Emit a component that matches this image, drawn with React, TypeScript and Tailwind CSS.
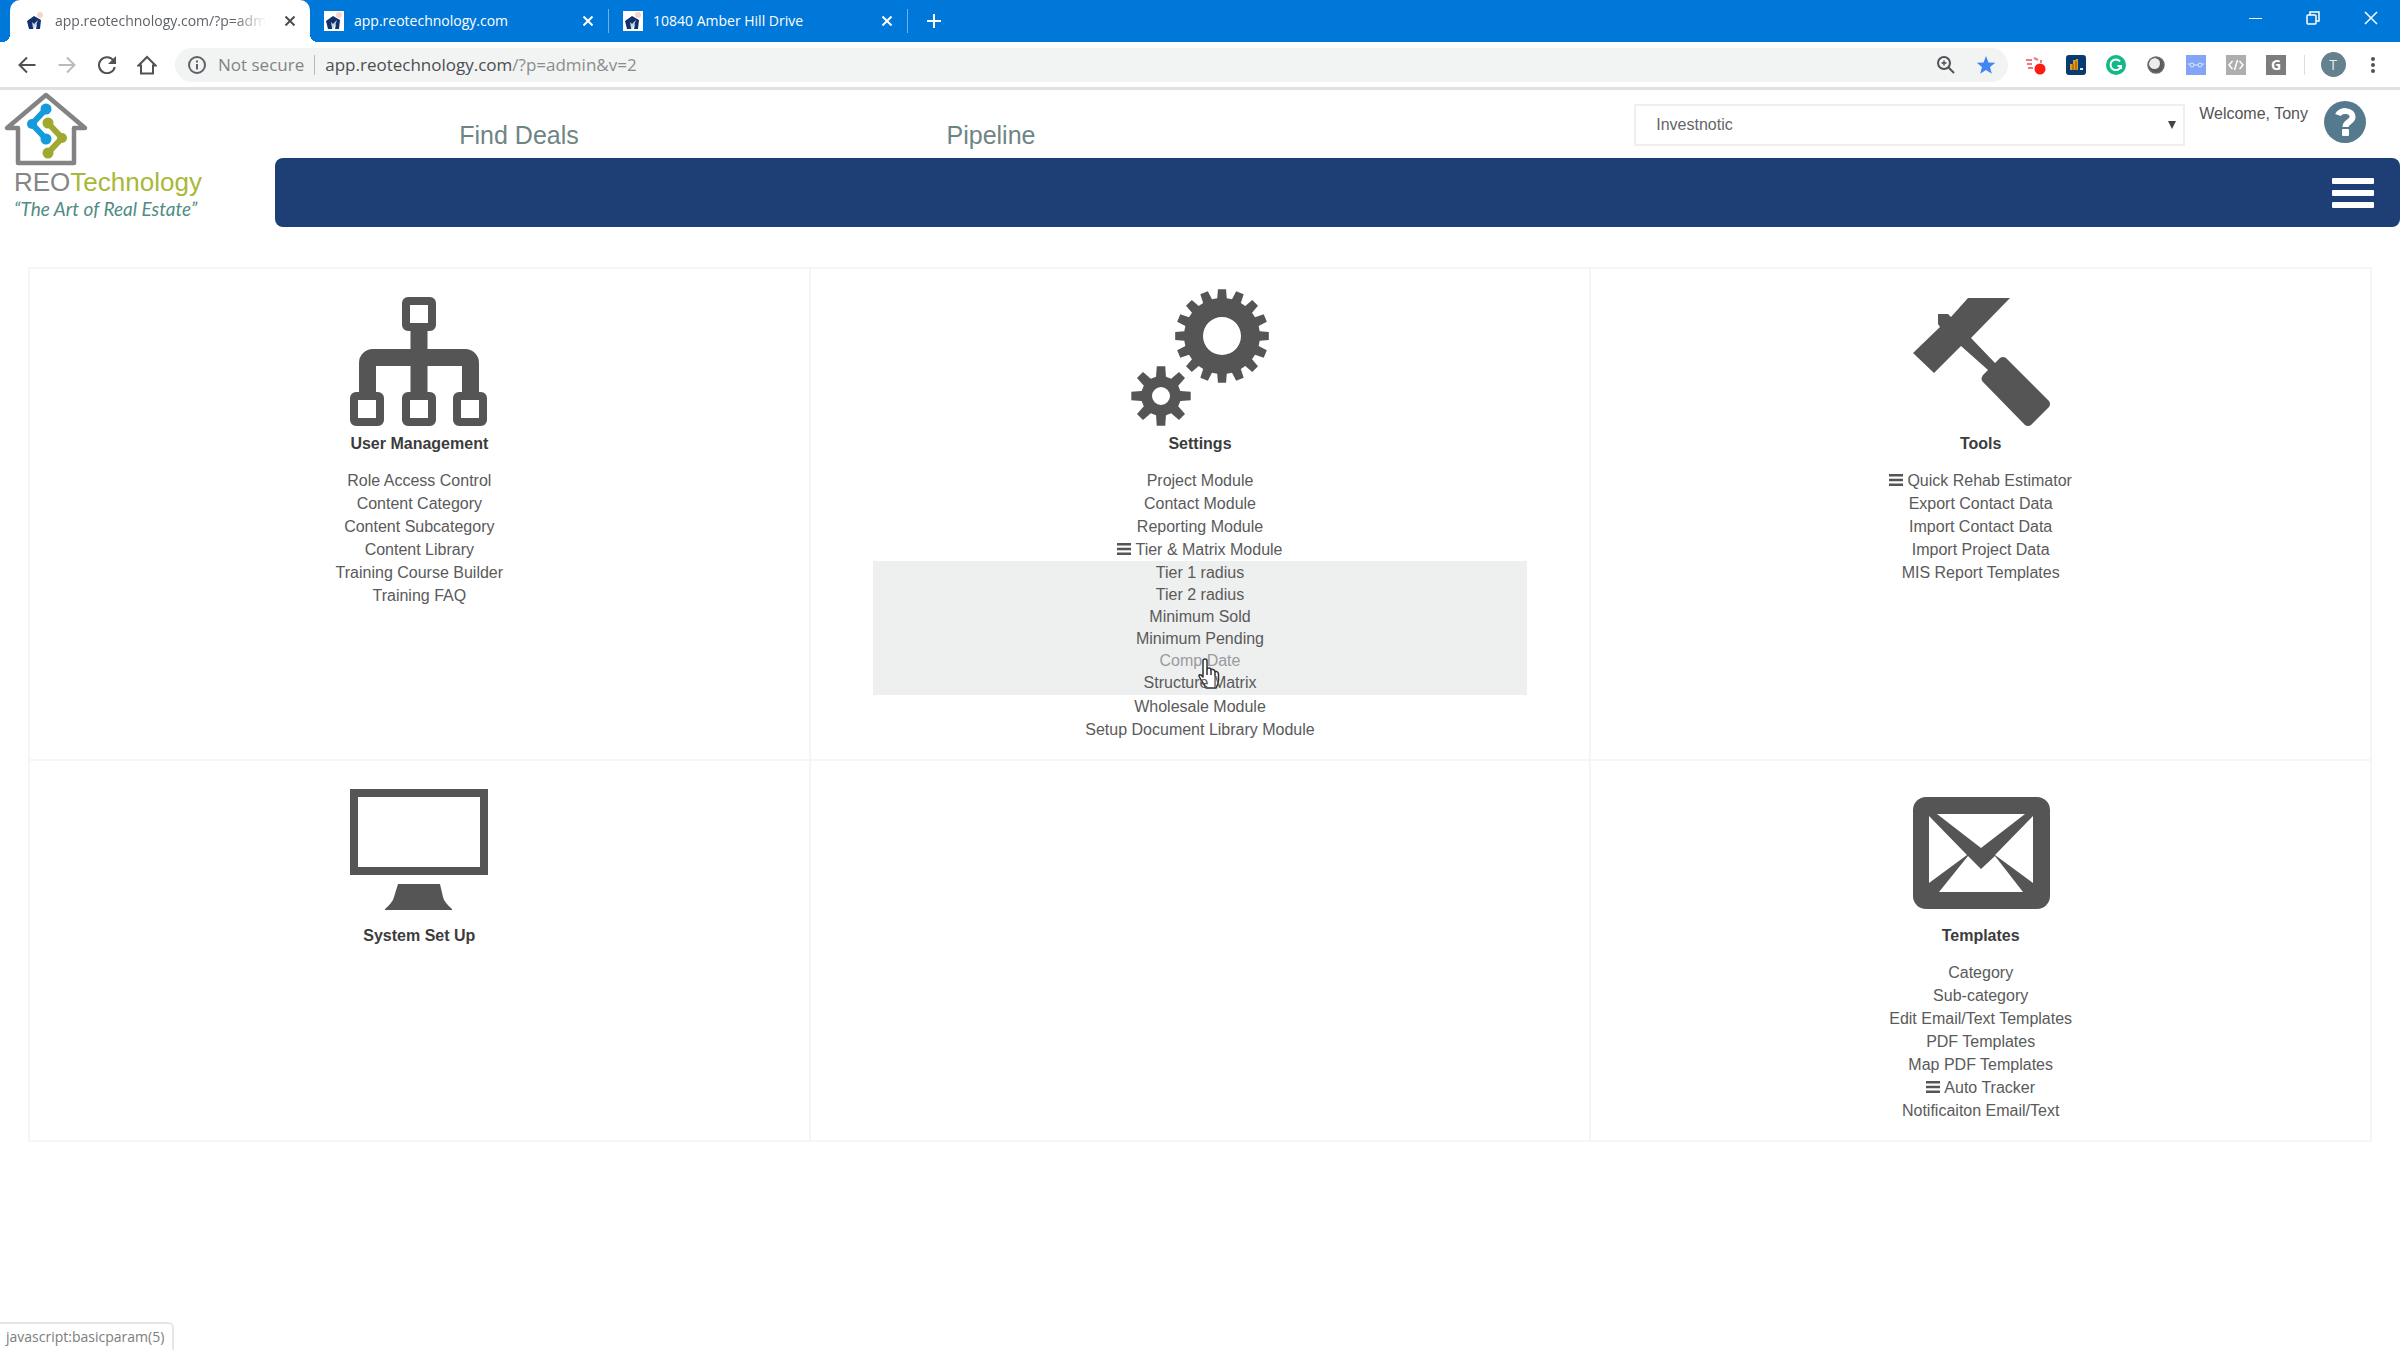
import React from "react";

const INK = "#555555";

function Favicon({ boxed = false }: { boxed?: boolean }) {
  return (
    <svg viewBox="0 0 20 20" className="size-5 shrink-0" aria-hidden="true">
      {boxed && <rect width="20" height="20" fill="#ffffff" />}
      <circle cx="15" cy="4" r="3" fill="#f6d3cd" />
      <path d="M2 10 L9 5 L16 9 L15 18 L11 18 L12 13 L9 16 L8 18 L4 18 Z" fill="#12306b" />
      <path d="M7 11 L9 13 L13 9 L10 17 L8 17 Z" fill="#c9d6ea" />
    </svg>
  );
}

function CloseGlyph() {
  return (
    <svg viewBox="0 0 10 10" className="size-[10px]" fill="none" stroke="currentColor" strokeWidth="2" aria-hidden="true">
      <path d="M0.500 0.500 L9.500 9.500 M9.500 0.500 L0.500 9.500" />
    </svg>
  );
}

function Tab({ title, active = false }: { title: string; active?: boolean }) {
  if (active) {
    return (
      <div className="relative flex h-full w-[300px] items-center rounded-t-[10px] bg-white pl-[15px] pr-[10px] text-[#5f6368]">
        <span className="absolute -left-2 bottom-0 size-2 bg-[radial-gradient(circle_at_0_0,#0078d9_8px,#ffffff_8px)]" />
        <span className="absolute -right-2 bottom-0 size-2 bg-[radial-gradient(circle_at_100%_0,#0078d9_8px,#ffffff_8px)]" />
        <Favicon />
        <span className="ml-[10px] whitespace-nowrap [mask-image:linear-gradient(to_right,black_85%,transparent)]">
          {title}
        </span>
        <button aria-label="Close tab" className="ml-auto flex size-5 items-center justify-center text-[#4a4d51]">
          <CloseGlyph />
        </button>
      </div>
    );
  }
  return (
    <div className="flex h-6 w-[299px] items-center border-r border-[#6db2ea] pl-[14px] pr-[10px] text-white">
      <Favicon boxed />
      <span className="ml-[10px] flex-1 whitespace-nowrap">{title}</span>
      <button aria-label="Close tab" className="flex size-5 items-center justify-center">
        <CloseGlyph />
      </button>
    </div>
  );
}

function TabStrip() {
  return (
    <div className="flex h-[42px] items-center bg-[#0078d9] pl-[10px] font-['Open_Sans',sans-serif] text-sm">
      <Tab title="app.reotechnology.com/?p=adm" active />
      <Tab title="app.reotechnology.com" />
      <Tab title="10840 Amber Hill Drive" />
      <button aria-label="New tab" className="ml-[14px] flex size-6 items-center justify-center text-white">
        <svg viewBox="0 0 14 14" className="size-[14px]" stroke="currentColor" strokeWidth="2" aria-hidden="true">
          <path d="M7 0 V14 M0 7 H14" />
        </svg>
      </button>
      <div className="ml-auto flex h-full items-start text-white">
        <button aria-label="Minimize" className="flex h-9 w-[58px] items-center justify-center">
          <svg viewBox="0 0 14 14" className="size-[14px]" stroke="currentColor" aria-hidden="true">
            <path d="M1 7.500 H14" />
          </svg>
        </button>
        <button aria-label="Restore" className="flex h-9 w-[58px] items-center justify-center">
          <svg viewBox="0 0 14 14" className="size-[14px]" fill="none" stroke="currentColor" strokeWidth="1.500" aria-hidden="true">
            <rect x="1" y="4" width="9" height="9" rx="1" />
            <path d="M4 4 V1 H13 V10 H10" />
          </svg>
        </button>
        <button aria-label="Close window" className="flex h-9 w-[58px] items-center justify-center">
          <svg viewBox="0 0 14 14" className="size-[14px]" stroke="currentColor" strokeWidth="1.500" aria-hidden="true">
            <path d="M1 1 L13 13 M13 1 L1 13" />
          </svg>
        </button>
      </div>
    </div>
  );
}

function ToolButton({ label, children }: { label: string; children: React.ReactNode }) {
  return (
    <button aria-label={label} className="flex h-8 w-10 shrink-0 items-center justify-center">
      {children}
    </button>
  );
}

function Toolbar() {
  const stroke = { fill: "none", stroke: "#4f5256", strokeWidth: 2 };
  return (
    <div className="flex h-12 items-center border-b-[3px] border-[#e1e1e1] bg-white px-[7px] font-['Open_Sans',sans-serif] text-[17px]">
      <ToolButton label="Back">
        <svg viewBox="0 0 18 18" className="size-[18px]" {...stroke}>
          <path d="M17.500 9 H2 M9 1.500 L1.500 9 L9 16.500" />
        </svg>
      </ToolButton>
      <ToolButton label="Forward">
        <svg viewBox="0 0 18 18" className="size-[18px]" {...stroke} stroke="#b9bbbd">
          <path d="M0.500 9 H16 M9 1.500 L16.500 9 L9 16.500" />
        </svg>
      </ToolButton>
      <ToolButton label="Reload">
        <svg viewBox="0 0 18 18" className="size-[18px]" {...stroke}>
          <path d="M15.500 4.500 A8 8 0 1 0 16.800 11" />
          <path d="M18 0 V8 H10 Z" fill="#4f5256" stroke="none" />
        </svg>
      </ToolButton>
      <ToolButton label="Home">
        <svg viewBox="0 0 20 20" className="size-5" {...stroke}>
          <path d="M1.500 10.500 L10 2 L18.500 10.500 H16 V18.500 H4 V10.500 Z" />
        </svg>
      </ToolButton>
      <div className="ml-2 flex h-[34px] flex-1 items-center rounded-full bg-[#f2f3f3] pl-[13px] pr-[2px]">
        <svg viewBox="0 0 18 18" className="size-[18px]" fill="none" stroke="#5f6368" strokeWidth="2" aria-hidden="true">
          <circle cx="9" cy="9" r="8" />
          <path d="M9 8 V13.500 M9 4.500 V6.500" />
        </svg>
        <span className="ml-3 text-[#808386]">Not secure</span>
        <span className="mx-[10px] h-5 w-px bg-[#b5b7b9]" />
        <div role="textbox" aria-label="Address" className="flex-1 text-[#8a8c8f]">
          <span className="text-[#4b4e52]">app.reotechnology.com</span>/?p=admin&amp;v=2
        </div>
        <ToolButton label="Zoom">
          <svg viewBox="0 0 18 18" className="size-[18px]" {...stroke}>
            <circle cx="7" cy="7" r="6" />
            <path d="M11.500 11.500 L17 17" />
            <path d="M4.500 7 H9.500 M7 4.500 V9.500" strokeWidth="1.500" />
          </svg>
        </ToolButton>
        <ToolButton label="Bookmark">
          <svg viewBox="0 0 20 20" className="size-5" fill="#4285f4">
            <path d="M10 1 L12.500 7.400 L19.300 7.700 L14 12 L15.800 18.700 L10 15 L4.200 18.700 L6 12 L0.700 7.700 L7.500 7.400 Z" />
          </svg>
        </ToolButton>
      </div>
      <div className="ml-2 flex items-center">
        <ToolButton label="Screen capture extension">
          <svg viewBox="0 0 20 20" className="size-5" aria-hidden="true">
            <path d="M0 5 H6 M1 9 H6 M2 13 H7" stroke="#f07a74" strokeWidth="2" />
            <path d="M8 3 L12 5 M15 5 V8" stroke="#f07a74" strokeWidth="2" />
            <circle cx="14" cy="14" r="5.500" fill="#fb1d12" />
          </svg>
        </ToolButton>
        <ToolButton label="Analytics extension">
          <svg viewBox="0 0 20 20" className="size-5" aria-hidden="true">
            <rect width="20" height="20" rx="3" fill="#063b73" />
            <path d="M4 15 V9 H7 V5 H10 V4 H12 V15 Z" fill="#e59a1c" />
            <path d="M7 9 V15 M10 6 V15" stroke="#7a5418" />
            <rect x="14" y="13" width="3" height="2" fill="#e8e8e8" />
          </svg>
        </ToolButton>
        <ToolButton label="Grammar extension">
          <svg viewBox="0 0 20 20" className="size-5" aria-hidden="true">
            <circle cx="10" cy="10" r="10" fill="#12b886" />
            <path d="M14 6.500 A5.300 5.300 0 1 0 15 11 H11.500 M15 11 V14" fill="none" stroke="#ffffff" strokeWidth="2" />
          </svg>
        </ToolButton>
        <ToolButton label="Recorder extension">
          <svg viewBox="0 0 18 18" className="size-[18px]" aria-hidden="true">
            <circle cx="9" cy="9" r="8" fill="#5c5c5c" />
            <circle cx="7.500" cy="7.500" r="5.500" fill="#ededed" />
            <circle cx="9" cy="9" r="8" fill="none" stroke="#6a6a6a" strokeWidth="1.500" />
          </svg>
        </ToolButton>
        <ToolButton label="Reader extension">
          <svg viewBox="0 0 20 20" className="size-5" fill="none" aria-hidden="true">
            <rect width="20" height="20" fill="#83a5f8" />
            <circle cx="6" cy="10" r="2" stroke="#dfe8fd" />
            <circle cx="14" cy="10" r="2" stroke="#dfe8fd" />
            <path d="M8 10 H12 M2 9 H4 M16 9 H18" stroke="#dfe8fd" />
          </svg>
        </ToolButton>
        <ToolButton label="Code extension">
          <svg viewBox="0 0 20 20" className="size-5" fill="none" stroke="#ffffff" strokeWidth="1.500" aria-hidden="true">
            <rect width="20" height="20" fill="#aeaeae" stroke="none" />
            <path d="M6.500 6 L3 10 L6.500 14 M13.500 6 L17 10 L13.500 14 M11.500 5 L8.500 15" />
          </svg>
        </ToolButton>
        <ToolButton label="G extension">
          <span className="flex size-5 items-center justify-center bg-[#7d7d7d] text-sm font-bold leading-none text-white">G</span>
        </ToolButton>
        <span className="mx-2 h-5 w-px bg-[#dddddd]" />
        <ToolButton label="Profile">
          <span className="flex size-[25px] items-center justify-center rounded-full bg-[#64818d] text-sm leading-none text-[#e6ecef]">T</span>
        </ToolButton>
        <ToolButton label="Menu">
          <svg viewBox="0 0 4 18" className="h-[18px] w-1" fill="#4f5256">
            <circle cx="2" cy="3" r="2" />
            <circle cx="2" cy="9" r="2" />
            <circle cx="2" cy="15" r="2" />
          </svg>
        </ToolButton>
      </div>
    </div>
  );
}

function Logo() {
  return (
    <a href="#home" className="flex w-[275px] shrink-0 flex-col">
      <svg viewBox="0 0 92 78" className="h-[78px] w-[92px]" fill="none" aria-hidden="true">
        <path
          d="M46 5 L7 38 H18 V73 H74 V38 H85 Z"
          stroke="#838383"
          strokeWidth="4.500"
          strokeLinejoin="round"
        />
        <g fill="#149bdc">
          <path d="M46 19 L32 34 L46 49" fill="none" stroke="#149bdc" strokeWidth="6" />
          <circle cx="46" cy="19" r="5.500" />
          <circle cx="32" cy="34" r="5" />
          <circle cx="46" cy="49" r="5.500" />
        </g>
        <g fill="#9fa92f">
          <path d="M48 33 L62 48 L48 63" fill="none" stroke="#9fa92f" strokeWidth="6" />
          <circle cx="48" cy="33" r="5.500" />
          <circle cx="62" cy="48" r="5" />
          <circle cx="48" cy="63" r="5.500" />
        </g>
      </svg>
      <span className="ml-[14px] text-[26px] leading-7 text-[#858585]">
        REO<span className="text-[#a9b839]">Technology</span>
      </span>
      <span className="ml-[14px] font-['Lato',sans-serif] text-[19px] italic leading-[26px] text-[#4f8c84]">
        &ldquo;The Art of Real Estate&rdquo;
      </span>
    </a>
  );
}

function Header() {
  return (
    <header className="flex">
      <Logo />
      <div className="flex-1">
        <div className="flex h-[68px] items-start">
          <nav className="flex pl-2 pt-[29px] text-center text-[25px] leading-8 text-[#6e8583]">
            <a href="#deals" className="w-[472px]">Find Deals</a>
            <a href="#pipeline" className="w-[472px]">Pipeline</a>
          </nav>
          <div className="relative ml-auto mt-[14px] w-[551px]">
            <select
              aria-label="Account"
              className="h-[42px] w-full appearance-none border-2 border-[#efefef] bg-white pl-5 text-base text-[#666666]"
            >
              <option>Investnotic</option>
            </select>
            <svg viewBox="0 0 8 8" className="pointer-events-none absolute right-[9px] top-[17px] size-2" fill="#444444" aria-hidden="true">
              <path d="M0 0 H8 L4 8 Z" />
            </svg>
          </div>
          <span className="ml-[14px] mt-[13px] text-base leading-[22px] text-[#555555]">Welcome, Tony</span>
          <button aria-label="Help" className="ml-4 mr-[34px] mt-[11px]">
            <svg viewBox="0 0 42 42" className="size-[42px]" aria-hidden="true">
              <circle cx="21" cy="21" r="21" fill="#567a8d" />
              <path d="M14 14 C16 8.500 28.500 8.500 28.500 16 C28.500 21 21.500 20.500 21.500 26" fill="none" stroke="#ffffff" strokeWidth="6" />
              <rect x="18" y="28" width="7" height="7" rx="1" fill="#ffffff" />
            </svg>
          </button>
        </div>
        <div className="flex h-[69px] items-center justify-end rounded-lg bg-[#1e3e76] pr-[26px]">
          <button aria-label="Open menu" className="flex flex-col gap-[6px]">
            <span className="h-[6px] w-[42px] rounded-[1px] bg-white" />
            <span className="h-[6px] w-[42px] rounded-[1px] bg-white" />
            <span className="h-[6px] w-[42px] rounded-[1px] bg-white" />
          </button>
        </div>
      </div>
    </header>
  );
}

function gearPath(cx: number, cy: number, outer: number, root: number, hole: number, teeth: number) {
  const step = (Math.PI * 2) / teeth;
  const at = (r: number, a: number) => `${(cx + r * Math.sin(a)).toFixed(2)} ${(cy - r * Math.cos(a)).toFixed(2)}`;
  let d = "";
  for (let i = 0; i < teeth; i++) {
    const a = i * step;
    const tip = step * (teeth > 10 ? 0.22 : 0.18);
    const base = step * 0.32;
    d += `${i === 0 ? "M" : "L"}${at(root, a - base)} L${at(outer, a - tip)} L${at(outer, a + tip)} L${at(root, a + base)} `;
  }
  d += `Z M${cx - hole} ${cy} a${hole} ${hole} 0 1 0 ${hole * 2} 0 a${hole} ${hole} 0 1 0 ${-hole * 2} 0 Z`;
  return d;
}

function IconFrame({ children }: { children: React.ReactNode }) {
  return (
    <svg viewBox="0 0 138 138" className="size-[138px]" fill={INK} fillRule="evenodd" aria-hidden="true">
      {children}
    </svg>
  );
}

function OrgIcon() {
  return (
    <IconFrame>
      <g fill="none" stroke={INK} strokeWidth="8">
        <rect x="56" y="13" width="26" height="26" rx="2" />
        <rect x="4" y="108" width="26" height="26" rx="2" />
        <rect x="56" y="108" width="26" height="26" rx="2" />
        <rect x="107" y="108" width="26" height="26" rx="2" />
      </g>
      <path d="M60.500 42 H77.500 V61 H115 A14 14 0 0 1 129 75 V105 H112 V78 H77.500 V105 H60.500 V78 H26 V105 H9 V75 A14 14 0 0 1 23 61 H60.500 Z" />
    </IconFrame>
  );
}

function GearsIcon() {
  return (
    <IconFrame>
      <path d={gearPath(91, 48, 47, 38, 19, 16)} />
      <path d={gearPath(30, 108, 30, 20, 9, 8)} />
    </IconFrame>
  );
}

function HammerIcon() {
  return (
    <IconFrame>
      <path d="M56 10 H98 L59 50 L83 75 L88 70 Q91 68 94 70 L137 113 Q139 116 137 119 L119 137 Q116 139 113 137 L71 94 Q68 91 71 87 L76 82 L49 58 L22 85 L1 65 L28 39 L26 36 V26 H36 L39 29 Z" />
    </IconFrame>
  );
}

function MonitorIcon() {
  return (
    <IconFrame>
      <path d="M0 9 H138 V95 H0 Z M8 17 V87 H130 V17 Z" />
      <path d="M48 104 H90 L93 117 Q94 122 102 129 V130 H35 V129 Q43 122 44 117 Z" />
    </IconFrame>
  );
}

function MailIcon() {
  return (
    <IconFrame>
      <rect x="1" y="17" width="137" height="112" rx="13" />
      <g fill="#ffffff">
        <path d="M25 34 H113 L69 68 Z" />
        <path d="M17 36 L55 75 L17 103 Z" />
        <path d="M121 36 L83 75 L121 103 Z" />
        <path d="M27 112 L56 76 L69 89 L83 76 L111 112 Z" />
      </g>
    </IconFrame>
  );
}

function ListIcon() {
  return (
    <svg viewBox="0 0 14 12" className="mr-1 inline-block h-3 w-[14px] align-baseline" fill={INK} aria-hidden="true">
      <path d="M0 0 H14 V2.500 H0 Z M0 4.750 H14 V7.250 H0 Z M0 9.500 H14 V12 H0 Z" />
    </svg>
  );
}

function HandCursor() {
  return (
    <svg viewBox="0 0 22 32" className="pointer-events-none absolute left-1/2 top-2 h-8 w-[22px] -translate-x-0.5" aria-hidden="true">
      <path
        d="M5 3 Q5 1 7 1 Q9 1 9 3 V11 Q9 10 11 10 Q13 10 13 12 Q13 11 15 11.500 Q17 12 17 13.500 Q17 13 18.500 13.500 Q20.500 14 20.500 16 V22 Q20.500 26 18 30 H8 Q6 26 3 22 L1 18 Q1 16 3 17 L5 19 Z"
        fill="#ffffff"
        stroke="#333333"
        strokeWidth="1.500"
        strokeLinejoin="round"
      />
      <path d="M9 11 V17 M13 12 V17 M17 13 V18" stroke="#333333" strokeWidth="1.500" fill="none" />
    </svg>
  );
}

type Item = { label: string; expandable?: boolean; children?: { label: string; hovered?: boolean }[] };
type Section = { title: string; icon: React.ReactNode; items: Item[] };

const sections: (Section | null)[] = [
  {
    title: "User Management",
    icon: <OrgIcon />,
    items: [
      { label: "Role Access Control" },
      { label: "Content Category" },
      { label: "Content Subcategory" },
      { label: "Content Library" },
      { label: "Training Course Builder" },
      { label: "Training FAQ" },
    ],
  },
  {
    title: "Settings",
    icon: <GearsIcon />,
    items: [
      { label: "Project Module" },
      { label: "Contact Module" },
      { label: "Reporting Module" },
      {
        label: "Tier & Matrix Module",
        expandable: true,
        children: [
          { label: "Tier 1 radius" },
          { label: "Tier 2 radius" },
          { label: "Minimum Sold" },
          { label: "Minimum Pending" },
          { label: "Comp Date", hovered: true },
          { label: "Structure Matrix" },
        ],
      },
      { label: "Wholesale Module" },
      { label: "Setup Document Library Module" },
    ],
  },
  {
    title: "Tools",
    icon: <HammerIcon />,
    items: [
      { label: "Quick Rehab Estimator", expandable: true },
      { label: "Export Contact Data" },
      { label: "Import Contact Data" },
      { label: "Import Project Data" },
      { label: "MIS Report Templates" },
    ],
  },
  { title: "System Set Up", icon: <MonitorIcon />, items: [] },
  null,
  {
    title: "Templates",
    icon: <MailIcon />,
    items: [
      { label: "Category" },
      { label: "Sub-category" },
      { label: "Edit Email/Text Templates" },
      { label: "PDF Templates" },
      { label: "Map PDF Templates" },
      { label: "Auto Tracker", expandable: true },
      { label: "Notificaiton Email/Text" },
    ],
  },
];

function SectionCell({ section }: { section: Section | null }) {
  if (!section) return <section className="border-b-2 border-r-2 border-[#f5f5f5]" />;
  return (
    <section className="flex flex-col items-center border-b-2 border-r-2 border-[#f5f5f5] pb-[18px] pt-[19px]">
      {section.icon}
      <h2 className="mt-[5px] text-base font-bold leading-[26px] text-[#3c3c3c]">{section.title}</h2>
      <ul className="mt-3 w-full px-[8%] text-center text-base leading-[23px] text-[#5a5a5a]">
        {section.items.map((item) => (
          <li key={item.label}>
            <a href="#module">
              {item.expandable && <ListIcon />}
              {item.label}
            </a>
            {item.children && (
              <ul className="bg-[#eeefef] py-px leading-[22px]">
                {item.children.map((child) => (
                  <li key={child.label} className="relative">
                    <a href="#param" className={child.hovered ? "text-[#9a9a9f]" : undefined}>
                      {child.label}
                    </a>
                    {child.hovered && <HandCursor />}
                  </li>
                ))}
              </ul>
            )}
          </li>
        ))}
      </ul>
    </section>
  );
}

export default function App() {
  return (
    <div className="min-h-screen bg-white font-['Liberation_Sans',Arial,sans-serif]">
      <TabStrip />
      <Toolbar />
      <Header />
      <main className="mx-7 mt-10 grid grid-cols-3 border-l-2 border-t-2 border-[#f5f5f5]">
        {sections.map((section, i) => (
          <SectionCell key={i} section={section} />
        ))}
      </main>
      <div className="fixed bottom-0 left-0 rounded-tr-md border-r-2 border-t-2 border-[#e6e6e6] bg-white pb-0.5 pl-[6px] pr-2 pt-0.5 font-['Open_Sans',sans-serif] text-sm leading-[22px] text-[#7d7d7d]">
        javascript:basicparam(5)
      </div>
    </div>
  );
}
